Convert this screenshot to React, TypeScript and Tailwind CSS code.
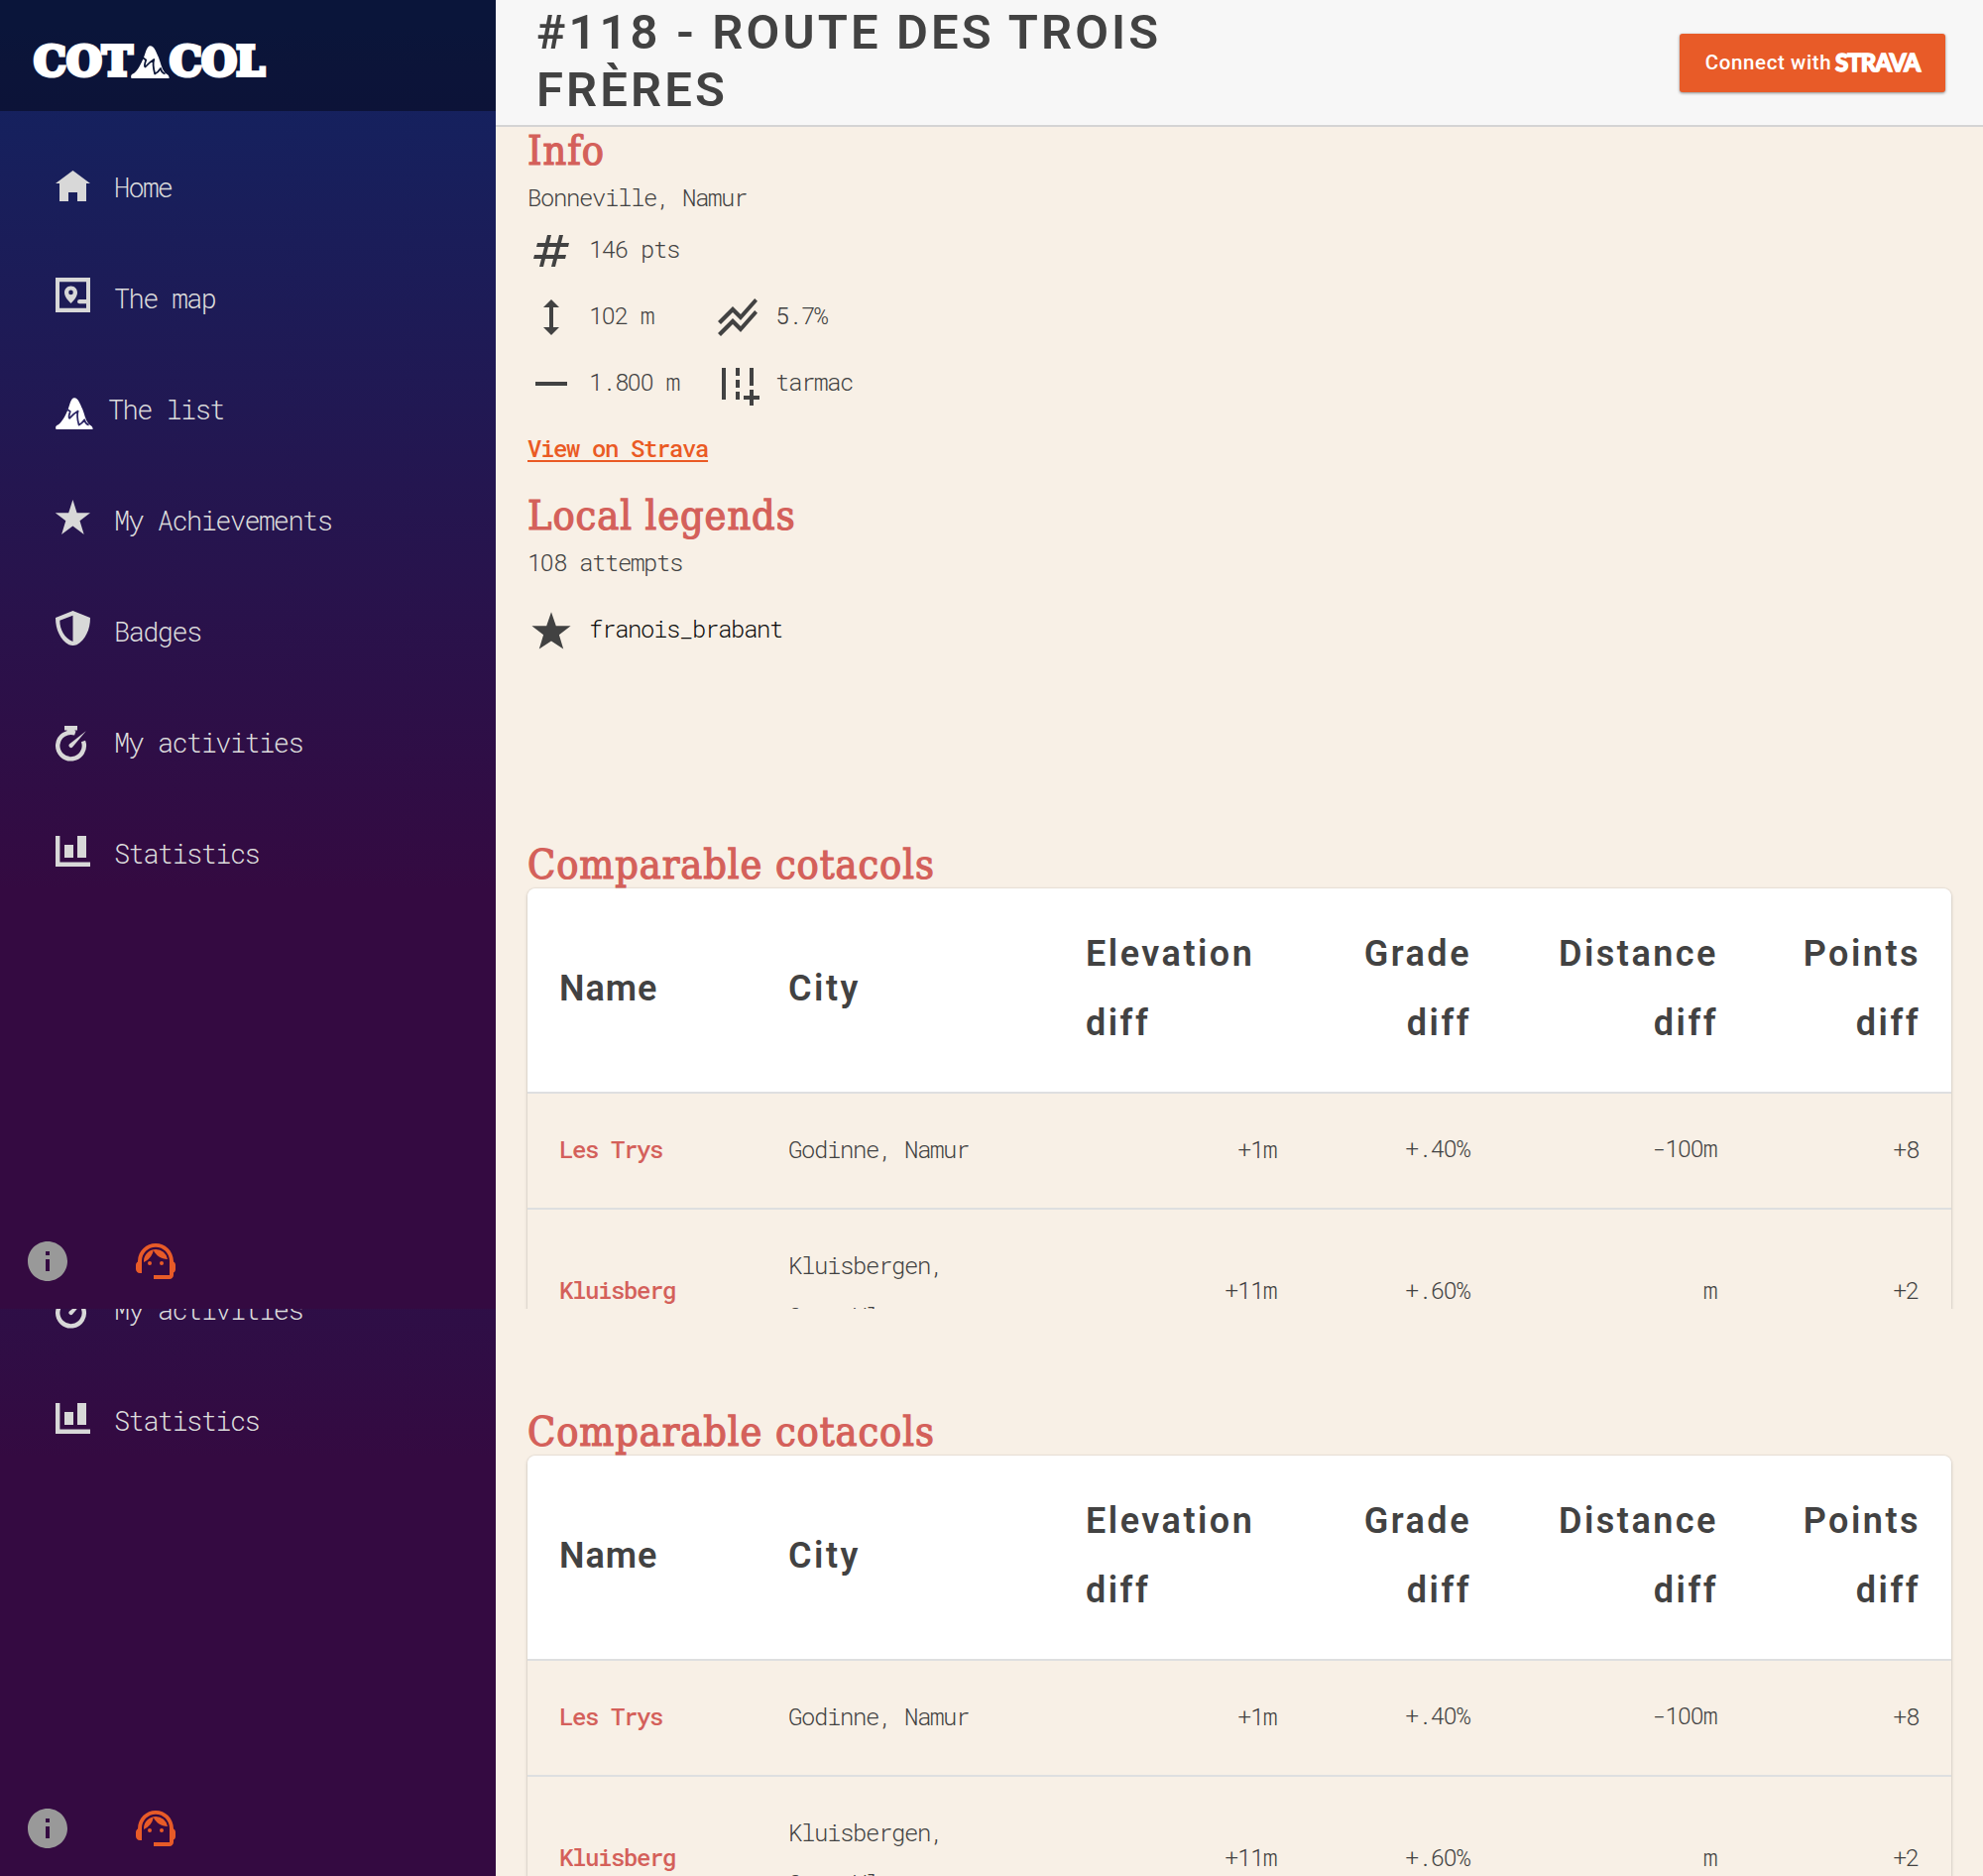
import React from 'react';
import { MdInfo, MdSupportAgent, MdNumbers, MdHeight, MdStackedLineChart, MdHorizontalRule, MdAddRoad } from 'react-icons/md';

const MONO = "font-['Roboto_Mono','Noto_Sans_Mono','Liberation_Mono',monospace]";
const HEADING =
  "font-['DejaVu_Serif_Condensed','DejaVu_Serif',serif] text-[41px] leading-[48px] tracking-[0.95px] text-[#d4605a] [-webkit-text-stroke:1.2px_#d4605a] whitespace-nowrap";

// Zeros are set in a face whose zero has no slash.
function PlainZeros({ text }: { text: string }) {
  return (
    <>
      {text.split(/(0+)/).map((part, i) =>
        part.startsWith('0') ? (
          <span key={i} className="font-['Roboto',sans-serif] tracking-[-0.44px]">{part}</span>
        ) : (
          part
        ),
      )}
    </>
  );
}

function Mountain({ className, line }: { className: string; line: string }) {
  return (
    <svg viewBox="0 0 39 33" className={className} preserveAspectRatio="none">
      <path d="M0.5 33 C-0.5 30 0.5 29 3 28 C7 25 10 19 13 12 C15 7 16 0.3 19.5 0.3 C23.5 0.3 25 6 28 12 C30 17 31 23 34 27 C36 29 39 29.5 38.5 33 Z" fill="#fff" />
      <path d="M11 11.5 L15.2 14.5 Q13 21 14.5 21.500 Q19 16.500 23.3 14 Q21.500 19 24.200 28.500 Q27.500 27 30 23 Q31 27.500 34.500 28.500" fill="none" stroke={line} strokeWidth="1.8" strokeLinejoin="round" />
    </svg>
  );
}

function NavIcon({ children }: { children: React.ReactNode }) {
  return (
    <svg viewBox="0 0 48 48" className="size-12 shrink-0" fill="#d8d8d8">
      {children}
    </svg>
  );
}

const nav: { label: string; icon: React.ReactNode; tight?: boolean }[] = [
  { label: 'Home', icon: <NavIcon><path d="M23.5 7 41 20H37V38H28V29H19V38H10V20H6Z" /></NavIcon> },
  {
    label: 'The map',
    icon: (
      <NavIcon>
        <path fillRule="evenodd" d="M6 3H41V38H6ZM10 7.2V33.8H37V7.2Z" />
        <path fillRule="evenodd" d="M21.5 11.5C17.8 11.5 15 14.4 15 18C15 22 18.5 26 21.5 29C24.500 26 28 22 28 18C28 14.400 25.200 11.500 21.500 11.500ZM21.500 15.600A2.300 2.300 0 1 1 21.500 20.200A2.300 2.300 0 1 1 21.500 15.600Z" />
        <path d="M38 25H30.200A2.150 2.150 0 0 0 30.200 29.300H38Z" />
      </NavIcon>
    ),
  },
  {
    label: 'The list',
    tight: true,
    icon: (
      <div className="flex size-12 shrink-0 items-start pt-3 pl-1.5">
        <Mountain className="h-8 w-[38px]" line="#2d2766" />
      </div>
    ),
  },
  { label: 'My Achievements', icon: <NavIcon><path d="M23.4 3 27.600 16.200H41L30.500 24.300 34.700 38 23.400 29.600 12.100 38 16.300 24.300 5.800 16.200H19.200Z" /></NavIcon> },
  {
    label: 'Badges',
    icon: (
      <NavIcon>
        <path fillRule="evenodd" d="M23.500 3 6 10C6 22 11 32.500 19.500 37.200Q23.500 38.800 27.500 37.200C36 32.500 41 22 41 10ZM23.500 7.800V34C15 30.500 10.300 22 10.300 12.800Z" />
      </NavIcon>
    ),
  },
  {
    label: 'My activities',
    icon: (
      <NavIcon>
        <path d="M15 7H28V11.500H25.500V14H17.500V11.500H15Z" />
        <path d="M34 22.500A13.300 13.300 0 1 1 25.800 14.500" fill="none" stroke="#d8d8d8" strokeWidth="4.400" />
        <path d="M36.800 12.200 23.300 28.300A2.200 2.200 0 0 1 19.900 25.500Z" />
      </NavIcon>
    ),
  },
  { label: 'Statistics', icon: <NavIcon><path d="M6 6H10.400V32.600H41V37H6ZM15 15H24V28H15ZM28 6H37V28H28Z" /></NavIcon> },
];

function Sidebar() {
  return (
    <aside className="flex h-full w-[500px] shrink-0 flex-col bg-[linear-gradient(180deg,#112462_0%,#340a41_68%,#340a41_100%)]">
      <div className="flex h-28 shrink-0 items-center bg-black/40 pt-[13px] pl-[34px]">
        <div className="flex items-center font-['DejaVu_Serif',serif] text-[41px] font-bold leading-none tracking-[0.3px] text-white [-webkit-text-stroke:4px_#fff]">
          <span className="w-[98px]">COT</span>
          <Mountain className="h-[33px] w-[39px]" line="#0b1638" />
          <span className="tracking-[-0.5px]">COL</span>
        </div>
      </div>
      <nav className="flex flex-col pt-[21px]">
        {nav.map((n) => (
          <a key={n.label} className="flex h-28 items-center pl-[50px]">
            {n.icon}
            <span className={`${MONO} ${n.tight ? 'ml-[11px]' : 'ml-[17px]'} pt-px text-[27px] font-light tracking-[-1.58px] text-[#dcdcdc]`}>{n.label}</span>
          </a>
        ))}
      </nav>
      <div className="mt-auto flex gap-[61px] pb-6 pl-6">
        <MdInfo className="size-12 text-[#999999]" />
        <MdSupportAgent className="size-12 text-[#e85b28]" />
      </div>
    </aside>
  );
}

function StarGlyph() {
  return (
    <svg viewBox="0 0 48 48" className="size-12" fill="currentColor">
      <path d="M24 5.300 28.800 19.200H43.600L31.900 28.300 36.200 42.500 24 34.500 11.800 42.500 16.100 28.300 4.400 19.200H19.200Z" />
    </svg>
  );
}

function Stat({ icon, text, dark }: { icon: React.ReactNode; text: string; dark?: boolean }) {
  return (
    <div className="flex h-12 items-start">
      {icon}
      <span className={`ml-3.5 leading-[44px] ${dark ? 'text-[#0c0c0c]' : ''}`}><PlainZeros text={text} /></span>
    </div>
  );
}

const columns = ['Name', 'City', 'Elevation diff', 'Grade diff', 'Distance diff', 'Points diff'];
const rows = [
  ['Les Trys', 'Godinne, Namur', '+1m', '+.40%', '-100m', '+8'],
  ['Kluisberg', 'Kluisbergen, Oost-Vl.', '+11m', '+.60%', 'm', '+2'],
];
const GRID = 'grid grid-cols-[231px_300px_257px_195px_249px_204px] items-center';

function ComparableTable() {
  return (
    <div className="w-[1436px] shrink-0 overflow-hidden rounded-t-lg shadow-[0_2px_4px_rgba(0,0,0,0.12),0_0_2px_rgba(0,0,0,0.2)]">
      <div className={`${GRID} h-[207px] border-b-2 border-[#dedfe0] bg-white pb-1 font-['Roboto',sans-serif] text-[36px] leading-[70px] font-semibold tracking-[2.5px] text-[#424242]`}>
        {columns.map((c, i) => (
          <div key={c} className={i > 2 ? 'pr-[31px] pl-8 text-right' : i === 0 ? 'px-8 tracking-[1px]' : 'px-8'}>{c}</div>
        ))}
      </div>
      {rows.map((r, ri) => (
        <div key={r[0]} className={`${GRID} ${ri === 0 ? 'h-[117px]' : 'h-[168px]'} border-b-2 border-[#dedfe0] bg-[#f8f0e6] pb-[3px] leading-[51px]`}>
          {r.map((v, i) => (
            <div key={i} className={i === 0 ? 'px-8 font-medium text-[#d4605a]' : i === 1 ? 'pr-20 pl-8' : 'pr-[33px] pl-8 text-right'}><PlainZeros text={v} /></div>
          ))}
        </div>
      ))}
    </div>
  );
}

function Screen() {
  return (
    <div className="flex h-[1320px] w-[2000px] shrink-0 overflow-hidden bg-[#f8f0e6]">
      <Sidebar />
      <main className="flex min-w-0 flex-1 flex-col">
        <header className="flex h-32 shrink-0 items-center justify-between border-b-2 border-[#d4d4d4] bg-[#f7f7f7] pr-[38px] pl-[41px]">
          <h1 className="w-[760px] pb-[3px] font-['Roboto',sans-serif] text-[49px] leading-[58px] font-semibold tracking-[3.1px] text-[#424242]">
            #118 - ROUTE DES TROIS<br />FRÈRES
          </h1>
          <button className="flex h-[59px] w-[268px] items-center rounded-[3px] bg-[#e85b28] pl-[22px] whitespace-nowrap text-white shadow-[0_1px_3px_rgba(0,0,0,0.45)]">
            <span className="w-[135px] font-['Roboto',sans-serif] text-[20.5px] font-medium tracking-[0.6px]">Connect with</span>
            <span className="font-['Lato',sans-serif] text-[24px] leading-none font-black tracking-[-1px] [-webkit-text-stroke:1.4px_#fff]">STRAVA</span>
          </button>
        </header>
        <div className={`${MONO} flex flex-col items-start px-8 text-[24px] font-[350] tracking-[-1.4px] text-[#424242]`}>
          <h2 className={`${HEADING} h-[47px]`}>Info</h2>
          <p className="h-[46px] leading-[48px]">Bonneville, Namur</p>
          <div className="mt-2 grid grid-cols-[188px_auto] gap-y-[19px]">
            <Stat icon={<MdNumbers className="size-12" />} text="146 pts" />
            <span />
            <Stat icon={<MdHeight className="size-12" />} text="102 m" />
            <Stat icon={<MdStackedLineChart className="size-12" />} text="5.7%" />
            <Stat icon={<MdHorizontalRule className="size-12" />} text="1.800 m" />
            <Stat icon={<MdAddRoad className="size-12" />} text="tarmac" />
          </div>
          <a className="mt-[17px] h-12 font-medium leading-[48px] text-[#ea5a24] underline decoration-2 underline-offset-[3px] [text-decoration-skip-ink:none]">View on Strava</a>
          <h2 className={`${HEADING} mt-5`}>Local legends</h2>
          <p className="h-[46px] leading-[46px]"><PlainZeros text="108 attempts" /></p>
          <div className="mt-[22px]"><Stat icon={<StarGlyph />} text="franois_brabant" dark /></div>
          <h2 className={`${HEADING} mt-[188px]`}>Comparable cotacols</h2>
          <ComparableTable />
        </div>
      </main>
    </div>
  );
}

export default function App() {
  return (
    <div className="flex h-[1892px] w-[2000px] flex-col overflow-hidden">
      <Screen />
      <div className="flex h-[572px] shrink-0 flex-col justify-end overflow-hidden">
        <Screen />
      </div>
    </div>
  );
}
